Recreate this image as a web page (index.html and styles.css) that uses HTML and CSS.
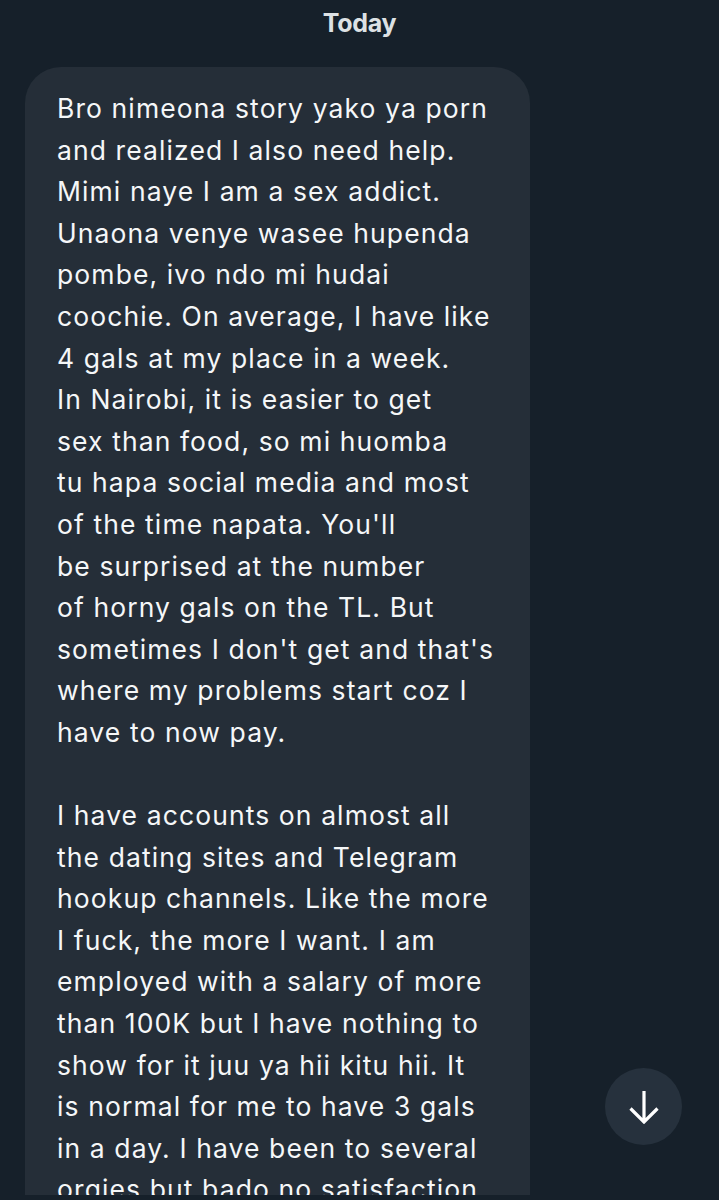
FILE: index.html
```html
<!DOCTYPE html>
<html lang="en">
<head>
<meta charset="utf-8">
<title>Messages</title>
<link rel="stylesheet" href="styles.css">
</head>
<body>
<main class="chat">
  <div class="day">Today</div>
  <div class="row">
    <div class="bubble">
      <p class="msg">Bro nimeona story yako ya porn<br>and realized I also need help.<br>Mimi naye I am a sex addict.<br>Unaona venye wasee hupenda<br>pombe, ivo ndo mi hudai<br>coochie. On average, I have like<br>4 gals at my place in a week.<br>In Nairobi, it is easier to get<br>sex than food, so mi huomba<br>tu hapa social media and most<br>of the time napata. You'll<br>be surprised at the number<br>of horny gals on the TL. But<br>sometimes I don't get and that's<br>where my problems start coz I<br>have to now pay.</p>
      <p class="msg">I have accounts on almost all<br>the dating sites and Telegram<br>hookup channels. Like the more<br>I fuck, the more I want. I am<br>employed with a salary of more<br>than 100K but I have nothing to<br>show for it juu ya hii kitu hii. It<br>is normal for me to have 3 gals<br>in a day. I have been to several<br>orgies but bado no satisfaction</p>
    </div>
  </div>
  <button class="scroll-down" aria-label="Scroll to bottom">
    <svg viewBox="0 0 32 34" width="32" height="34"><path d="M16 1 V32 M2.5 18.5 L16 32 L29.5 18.5" fill="none" stroke="#ffffff" stroke-width="3.2" stroke-linecap="butt" stroke-linejoin="miter"/></svg>
  </button>
</main>
</body>
</html>
```
FILE: styles.css
```css
html, body {
  margin: 0;
  padding: 0;
  background: #16202a;
}
body {
  font-family: "Inter", "Roboto", sans-serif;
  color: #f5f7f8;
}
.chat {
  position: relative;
  height: 1195px;
  overflow: hidden;
}
.day {
  box-sizing: border-box;
  height: 67px;
  padding-top: 8px;
  text-align: center;
  font-size: 25px;
  line-height: 30px;
  font-weight: 700;
  color: #dde1e4;
  letter-spacing: -0.3px;
}
.row {
  display: flex;
  padding-left: 25px;
}
.bubble {
  width: 505px;
  box-sizing: border-box;
  background: #252e38;
  border-radius: 36px;
  padding: 21px 10px 60px 32px;
}
.msg {
  margin: 0;
  font-size: 26.5px;
  line-height: 41.6px;
  letter-spacing: 1.1px;
  white-space: nowrap;
}
.msg + .msg {
  margin-top: 41.6px;
}
.scroll-down {
  position: absolute;
  left: 605px;
  top: 1068px;
  width: 77px;
  height: 77px;
  border-radius: 50%;
  border: none;
  background: #26313d;
  padding: 0;
  display: flex;
  align-items: center;
  justify-content: center;
}
.scroll-down svg {
  display: block;
}
```
